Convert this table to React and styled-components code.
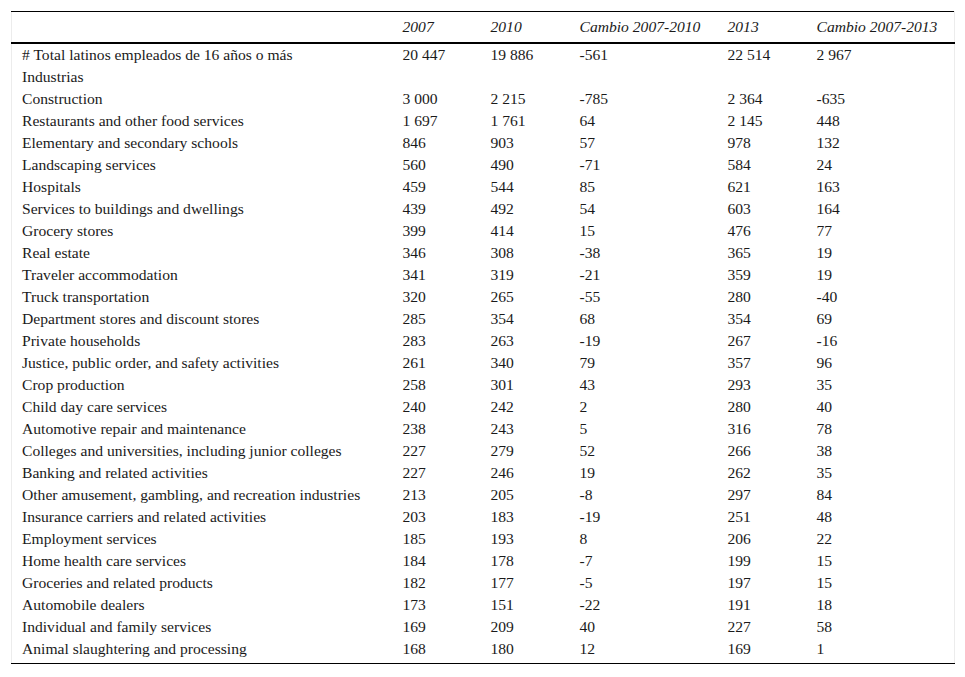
import React from 'react'
import styled, { createGlobalStyle } from "styled-components"

const GlobalStyle = createGlobalStyle`
        html, body {
                margin: 0;
                padding: 0;
                background: #ffffff;
        }
        body {
                font-family: "Liberation Serif", "Times New Roman", serif;
                color: #1a1a1a;
        }
`;

const Page = styled.div`
        padding: 11px 11px 0 11px;
`;

const Table = styled.table`
        width: 943px;
        table-layout: fixed;
        border-collapse: collapse;
        font-size: 15.6px;
        border-top: 1px solid #000;
        border-bottom: 1px solid #000;
        border-left: 1px solid #ececec;
        border-right: 1px solid #ececec;
`;

const HeadCell = styled.th`
        height: 30px;
        padding: 0 10px;
        font-weight: normal;
        font-style: italic;
        text-align: left;
        vertical-align: middle;
        white-space: nowrap;
        border-bottom: 2px solid #000;
`;

const Row = styled.tr`
        &:last-child td {
                padding-bottom: 3px;
        }
`;

const Cell = styled.td`
        height: 22px;
        line-height: 22px;
        padding: 0 10px;
        text-align: left;
        vertical-align: top;
        white-space: nowrap;
`;

const widths = [381, 88, 89, 148, 89, 148];

const headers = ["", "2007", "2010", "Cambio 2007-2010", "2013", "Cambio 2007-2013"];

const rows = [
    ["# Total latinos empleados de 16 años o más", "20 447", "19 886", "-561", "22 514", "2 967"],
    ["Industrias", "", "", "", "", ""],
    ["Construction", "3 000", "2 215", "-785", "2 364", "-635"],
    ["Restaurants and other food services", "1 697", "1 761", "64", "2 145", "448"],
    ["Elementary and secondary schools", "846", "903", "57", "978", "132"],
    ["Landscaping services", "560", "490", "-71", "584", "24"],
    ["Hospitals", "459", "544", "85", "621", "163"],
    ["Services to buildings and dwellings", "439", "492", "54", "603", "164"],
    ["Grocery stores", "399", "414", "15", "476", "77"],
    ["Real estate", "346", "308", "-38", "365", "19"],
    ["Traveler accommodation", "341", "319", "-21", "359", "19"],
    ["Truck transportation", "320", "265", "-55", "280", "-40"],
    ["Department stores and discount stores", "285", "354", "68", "354", "69"],
    ["Private households", "283", "263", "-19", "267", "-16"],
    ["Justice, public order, and safety activities", "261", "340", "79", "357", "96"],
    ["Crop production", "258", "301", "43", "293", "35"],
    ["Child day care services", "240", "242", "2", "280", "40"],
    ["Automotive repair and maintenance", "238", "243", "5", "316", "78"],
    ["Colleges and universities, including junior colleges", "227", "279", "52", "266", "38"],
    ["Banking and related activities", "227", "246", "19", "262", "35"],
    ["Other amusement, gambling, and recreation industries", "213", "205", "-8", "297", "84"],
    ["Insurance carriers and related activities", "203", "183", "-19", "251", "48"],
    ["Employment services", "185", "193", "8", "206", "22"],
    ["Home health care services", "184", "178", "-7", "199", "15"],
    ["Groceries and related products", "182", "177", "-5", "197", "15"],
    ["Automobile dealers", "173", "151", "-22", "191", "18"],
    ["Individual and family services", "169", "209", "40", "227", "58"],
    ["Animal slaughtering and processing", "168", "180", "12", "169", "1"],
];

const App = () => {
    return (
        <Page>
            <GlobalStyle />
            <Table>
                <colgroup>
                    {widths.map((w, i) => <col key={i} style={{ width: w }} />)}
                </colgroup>
                <thead>
                    <tr>
                        {headers.map((h, i) => <HeadCell key={i}>{h}</HeadCell>)}
                    </tr>
                </thead>
                <tbody>
                    {rows.map((r, i) => (
                        <Row key={i}>
                            {r.map((c, j) => <Cell key={j}>{c}</Cell>)}
                        </Row>
                    ))}
                </tbody>
            </Table>
        </Page>
    )
}

export default App
